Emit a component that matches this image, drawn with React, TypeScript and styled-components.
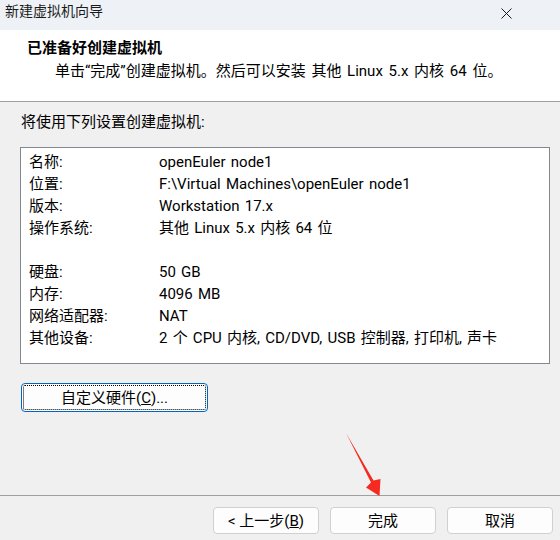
import React from "react";
import styled, { createGlobalStyle } from "styled-components";

const FONT = `Roboto, "Noto Sans CJK SC", sans-serif`;

const Global = createGlobalStyle`
  html, body { margin: 0; padding: 0; background: #f0f0f0; }
  body { font-family: ${FONT}; }
`;

const Window = styled.div`
  position: relative;
  width: 560px;
  height: 540px;
  display: flex;
  flex-direction: column;
  background: #f0f0f0;
  font-family: ${FONT};
  font-size: 15px;
  color: #000;
  overflow: hidden;
`;

const TitleBar = styled.div`
  height: 30px;
  box-sizing: border-box;
  padding: 1px 0 0 5px;
  display: flex;
  justify-content: space-between;
  align-items: flex-start;
  background: #eef2f7;
  font-size: 14px;
  line-height: 20px;
  color: #1a1a1a;
`;

const CloseBtn = styled.div`
  width: 46px;
  height: 24px;
  display: flex;
  align-items: center;
  justify-content: center;
  margin-right: 31px;
`;

const Header = styled.div`
  height: 72px;
  box-sizing: border-box;
  background: #fff;
  padding: 8px 0 0 27px;
  border-bottom: 1px solid #a0a0a0;
`;

const HeaderTitle = styled.div`
  font-weight: bold;
  line-height: 20px;
`;

const HeaderSub = styled.div`
  margin: 3px 0 0 28px;
  line-height: 20px;
  word-spacing: 2px;
`;

const Body = styled.div`
  flex: 1;
  padding: 10px 10px 0 20px;
  display: flex;
  flex-direction: column;
  align-items: flex-start;
`;

const Intro = styled.div`
  line-height: 20px;
  margin-left: 1px;
`;

const SummaryBox = styled.div`
  margin-top: 15px;
  width: 530px;
  height: 217px;
  box-sizing: border-box;
  background: #fff;
  border: 1px solid #828790;
  padding: 3px 0 0 8px;
`;

const Row = styled.div`
  display: grid;
  grid-template-columns: 130px 1fr;
  height: 22px;
  line-height: 22px;
  white-space: nowrap;
  word-spacing: 1.5px;
`;

const CustomButton = styled.button`
  margin-top: 19px;
  margin-left: 1px;
  width: 187px;
  height: 29px;
  box-sizing: border-box;
  background: #fdfdfd;
  border: 1px solid #0067c0;
  border-radius: 4px;
  padding: 1px;
  font-family: ${FONT};
  font-size: 15px;
  color: #000;
  display: flex;
`;

const FocusRect = styled.span`
  flex: 1;
  border: 1px dotted #000;
  border-radius: 2px;
  display: flex;
  align-items: center;
  justify-content: center;
  line-height: 20px;
`;

const Footer = styled.div`
  height: 45px;
  box-sizing: border-box;
  border-top: 1px solid #a0a0a0;
  display: flex;
  justify-content: flex-end;
  align-items: flex-start;
  gap: 11px;
  padding: 11px 7px 0 0;
`;

const NavButton = styled.button`
  width: 106px;
  height: 27px;
  box-sizing: border-box;
  background: #fdfdfd;
  border: 1px solid #d0d0d0;
  border-radius: 4px;
  font-family: ${FONT};
  font-size: 15px;
  color: #000;
  padding: 0;
  line-height: 20px;
`;

const Arrow = styled.svg`
  position: absolute;
  left: 0;
  top: 0;
  pointer-events: none;
`;

const rows: [string, string][] = [
  ["名称:", "openEuler node1"],
  ["位置:", "F:\\Virtual Machines\\openEuler node1"],
  ["版本:", "Workstation 17.x"],
  ["操作系统:", "其他 Linux 5.x 内核 64 位"],
  ["", ""],
  ["硬盘:", "50 GB"],
  ["内存:", "4096 MB"],
  ["网络适配器:", "NAT"],
  ["其他设备:", "2 个 CPU 内核, CD/DVD, USB 控制器, 打印机, 声卡"],
];

export default function App() {
  return (
    <>
      <Global />
      <Window>
        <TitleBar>
          <span>新建虚拟机向导</span>
          <CloseBtn>
            <svg width="11" height="11" viewBox="0 0 11 11">
              <path d="M0.5 0.5 L10.5 10.5 M10.5 0.5 L0.5 10.5" stroke="#1a1a1a" strokeWidth="1" />
            </svg>
          </CloseBtn>
        </TitleBar>
        <Header>
          <HeaderTitle>已准备好创建虚拟机</HeaderTitle>
          <HeaderSub>单击“完成”创建虚拟机。然后可以安装 其他 Linux 5.x 内核 64 位。</HeaderSub>
        </Header>
        <Body>
          <Intro>将使用下列设置创建虚拟机:</Intro>
          <SummaryBox>
            {rows.map(([k, v], i) => (
              <Row key={i}>
                <span>{k}</span>
                <span>{v}</span>
              </Row>
            ))}
          </SummaryBox>
          <CustomButton>
            <FocusRect>
              自定义硬件(<u>C</u>)...
            </FocusRect>
          </CustomButton>
        </Body>
        <Footer>
          <NavButton>
            &lt; 上一步(<u>B</u>)
          </NavButton>
          <NavButton>完成</NavButton>
          <NavButton>取消</NavButton>
        </Footer>
        <Arrow width="560" height="540" viewBox="0 0 560 540">
          <polygon
            points="346,433 373.5,480.5 380.5,479 379.5,496 366,487.5 371,482.5"
            fill="#f52a20"
          />
        </Arrow>
      </Window>
    </>
  );
}
